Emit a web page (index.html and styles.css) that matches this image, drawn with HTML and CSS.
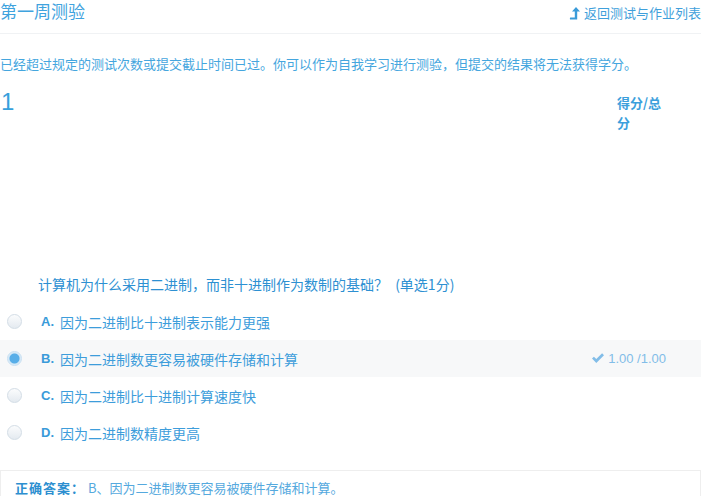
FILE: index.html
```html
<!DOCTYPE html>
<html lang="zh-CN">
<head>
<meta charset="utf-8">
<title>第一周测验</title>
<link rel="stylesheet" href="styles.css">
</head>
<body>
<div class="page">
  <div class="header">
    <div class="title">第一周测验</div>
    <a class="back" href="#">
      <svg class="back-icon" width="11" height="13" viewBox="0 0 11 13"><path d="M7 0 L11 4.5 L8.2 4.5 L8.2 12.5 L1 12.5 Q0.6 11.8 1.2 10.6 L5.8 10.6 L5.8 4.5 L3 4.5 Z" fill="#3a9bd9"/></svg>
      <span>返回测试与作业列表</span>
    </a>
  </div>
  <div class="notice">已经超过规定的测试次数或提交截止时间已过。你可以作为自我学习进行测验，但提交的结果将无法获得学分。</div>
  <div class="question">
    <div class="q-head">
      <div class="q-num">1</div>
      <div class="q-score">得分/总分</div>
    </div>
    <div class="q-text">计算机为什么采用二进制，而非十进制作为数制的基础？ <span class="q-type">(单选1分)</span></div>
    <div class="options">
      <div class="option">
        <span class="radio"></span>
        <span class="opt-letter">A.</span>
        <span class="opt-text">因为二进制比十进制表示能力更强</span>
      </div>
      <div class="option selected">
        <span class="radio checked"></span>
        <span class="opt-letter">B.</span>
        <span class="opt-text">因为二进制数更容易被硬件存储和计算</span>
        <span class="opt-score">
          <svg width="14" height="11" viewBox="0 0 14 11"><path d="M1 5.6 L2.9 3.7 L5.3 6.1 L11.1 0.3 L13 2.2 L5.3 9.9 Z" fill="#82bde8"/></svg>
          <span>1.00 /1.00</span>
        </span>
      </div>
      <div class="option">
        <span class="radio"></span>
        <span class="opt-letter">C.</span>
        <span class="opt-text">因为二进制比十进制计算速度快</span>
      </div>
      <div class="option">
        <span class="radio"></span>
        <span class="opt-letter">D.</span>
        <span class="opt-text">因为二进制数精度更高</span>
      </div>
    </div>
    <div class="answer">
      <span class="answer-label">正确答案：</span><span class="answer-text">B、因为二进制数更容易被硬件存储和计算。</span>
    </div>
  </div>
</div>
</body>
</html>
```

FILE: styles.css
```css
html, body {
  margin: 0;
  padding: 0;
  background: #ffffff;
}
body {
  font-family: "Noto Sans CJK SC", "Liberation Sans", sans-serif;
  color: #3a9bd9;
  width: 701px;
  overflow: hidden;
}
.page {
  width: 701px;
}
.header {
  display: flex;
  justify-content: space-between;
  align-items: flex-start;
  height: 33px;
  border-bottom: 1px solid #f0f2f4;
}
.title {
  font-size: 17px;
  line-height: 25px;
  margin-top: -2px;
  color: #3fa3de;
}
.back {
  display: flex;
  align-items: center;
  gap: 4px;
  margin-top: 4px;
  font-size: 13px;
  line-height: 18px;
  color: #3f9fdb;
  text-decoration: none;
}
.back-icon {
  display: block;
}
.notice {
  margin-top: 20px;
  font-size: 13px;
  line-height: 20px;
  color: #45a6de;
}
.question {
  margin-top: 14px;
}
.q-head {
  display: flex;
  justify-content: space-between;
  height: 186px;
}
.q-num {
  font-family: "Liberation Sans", sans-serif;
  font-size: 24px;
  line-height: 28px;
  color: #36a0dc;
  padding-left: 1px;
}
.q-score {
  width: 48px;
  margin-right: 36px;
  margin-top: 5px;
  font-size: 13px;
  line-height: 20px;
  font-weight: bold;
  color: #3c9fdc;
}
.q-text {
  padding-left: 38px;
  font-size: 14px;
  line-height: 20px;
  color: #2d90d2;
}
.q-type {
  margin-left: 4px;
}
.options {
  margin-top: 9px;
}
.option {
  display: flex;
  align-items: center;
  height: 37px;
  font-size: 14px;
  color: #3d9ddb;
}
.option.selected {
  background: #f7f8f9;
}
.radio {
  width: 13px;
  height: 13px;
  margin-left: 7px;
  border-radius: 50%;
  border: 1px solid #d3dde6;
  background: linear-gradient(#fbfcfd, #e4eaf0);
  box-sizing: content-box;
  flex-shrink: 0;
}
.radio.checked {
  border-color: #c7dff2;
  background: radial-gradient(circle, #58aee8 0, #58aee8 4.5px, #cfe6f6 5.5px, #e6f1fa 7px);
}
.opt-letter {
  margin-left: 19px;
  width: 19px;
  font-family: "Liberation Sans", sans-serif;
  font-weight: bold;
  font-size: 13px;
  color: #3a9bd9;
}
.opt-text {
  color: #3d9ddb;
}
.opt-score {
  margin-left: auto;
  margin-right: 35px;
  display: flex;
  align-items: center;
  gap: 3px;
  font-family: "Liberation Sans", sans-serif;
  font-size: 13px;
  color: #82bde8;
}
.answer {
  margin-top: 19px;
  border: 1px solid #eeeeee;
  border-bottom: none;
  padding: 7px 14px 10px;
  font-size: 13px;
  line-height: 20px;
}
.answer-label {
  font-weight: bold;
  color: #2d8fd0;
  letter-spacing: 1px;
  margin-right: 3px;
}
.answer-text {
  color: #55a9de;
}
```
